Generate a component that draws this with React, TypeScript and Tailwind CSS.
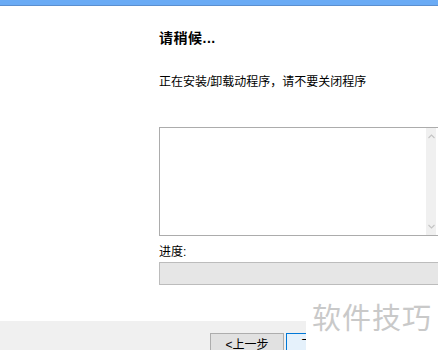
export default function App() {
  return (
    <div className="relative w-[438px] h-[350px] overflow-hidden bg-white font-['Liberation_Sans','Noto_Sans_CJK_SC',sans-serif] text-black">
      {/* title bar edge */}
      <div className="h-[6px] bg-[#6aabf5] border-b border-[#5b8fcf]" />

      <div className="pl-[159px]">
        <div className="mt-[24px] h-[16px] leading-[16px] text-[14px] font-bold tracking-[0.5px]">请稍候...</div>
        <div className="mt-[28px] h-[16px] leading-[16px] text-[12px]">
          正在安装/卸载动程序，请不要关闭程序
        </div>

        {/* log box */}
        <div className="mt-[37px] w-[290px] h-[109px] border border-[#acacac] flex">
          <div className="flex-1" />
          <div className="w-[10px] mr-[12px] bg-[#f0f0f0] flex flex-col items-center justify-between py-[6px]">
            <svg width="7" height="5" viewBox="0 0 7 5">
              <path d="M0.5 4 L3.5 1 L6.5 4" fill="none" stroke="#c4c4c4" strokeWidth="1.1" />
            </svg>
            <svg width="7" height="5" viewBox="0 0 7 5">
              <path d="M0.5 1 L3.5 4 L6.5 1" fill="none" stroke="#c4c4c4" strokeWidth="1.1" />
            </svg>
          </div>
        </div>

        <div className="mt-[8px] h-[16px] leading-[16px] text-[12px]">进度:</div>
        <div className="mt-[2px] w-[290px] h-[23px] bg-[#e6e6e6] border border-[#bcbcbc]" />
      </div>

      {/* bottom button band */}
      <div className="absolute left-0 right-0 top-[321px] bottom-0 bg-[#f0f0f0] flex items-start pl-[210px] pt-[12px] gap-[2px]">
        <button className="w-[74px] h-[23px] border border-[#adadad] bg-[#e1e1e1] text-[12px] leading-[20px] text-center">
          &lt;上一步
        </button>
        <button className="w-[74px] h-[23px] border border-[#0078d7] bg-[#e5f1fb] text-[12px] leading-[20px] text-center">
          下一步&gt;
        </button>
      </div>

      {/* watermark */}
      <div className="absolute left-[306px] top-[296px] right-0 bottom-0 bg-white pl-[6px] pt-[2px] text-[29px] leading-[36px] text-[#c9c9c9] font-['Noto_Sans_CJK_SC',sans-serif] tracking-[1px]">
        软件技巧
      </div>
    </div>
  );
}
